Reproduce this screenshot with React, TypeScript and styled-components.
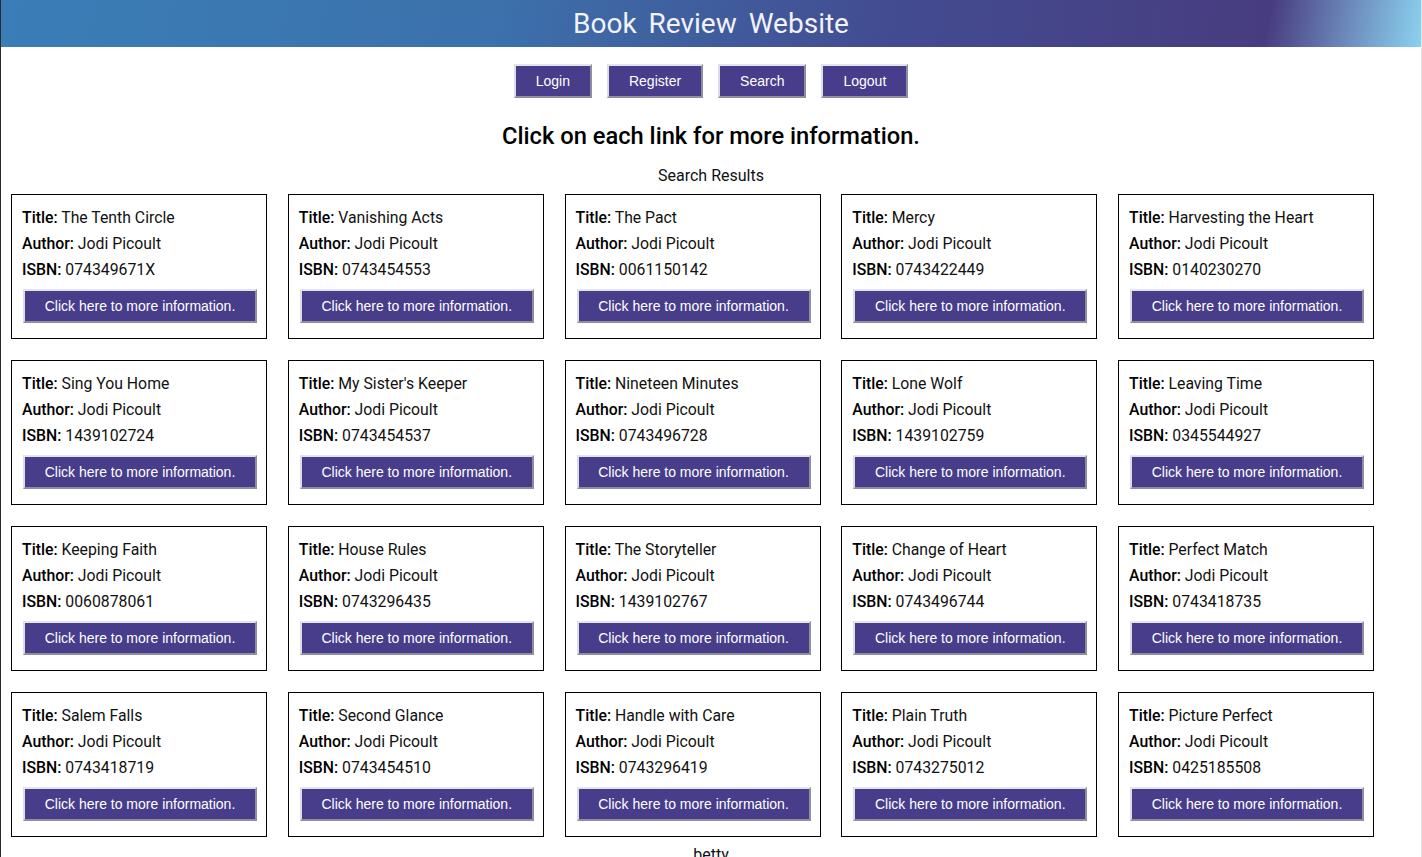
import React from "react";
import styled, { createGlobalStyle } from "styled-components";

const GlobalStyle = createGlobalStyle`
  html, body { margin: 0; padding: 0; background: #ffffff; }
  body { font-family: Roboto, "Liberation Sans", Arial, sans-serif; color: #111; }
`;

const Page = styled.div`
  min-height: 857px;
  border-left: 1px solid #2a2a2a;
  border-right: 1px solid #e4e4e4;
  box-sizing: border-box;
`;

const Header = styled.header`
  height: 47px;
  display: flex;
  align-items: center;
  justify-content: center;
  background: linear-gradient(100deg, #3a7eb7 0%, #3c71ab 35%, #434c91 62%, #483c80 89%, #6f8fc0 95%, #8ad2ee 100%);
`;

const SiteTitle = styled.h1`
  margin: 0;
  font-family: Roboto, "Liberation Sans", sans-serif;
  font-weight: 400;
  font-size: 28px;
  word-spacing: 5px;
  color: #f2f2fa;
  line-height: 47px;
`;

const Nav = styled.nav`
  display: flex;
  justify-content: center;
  gap: 15px;
  margin-top: 17px;
`;

const RaisedButton = styled.button<{ $wide?: boolean }>`
  box-sizing: border-box;
  height: 34px;
  width: ${(p) => (p.$wide ? "100%" : "auto")};
  padding: ${(p) => (p.$wide ? "0" : "0 20px")};
  background: #483d8b;
  color: #ffffff;
  font-family: "Liberation Sans", Arial, sans-serif;
  font-size: 14px;
  border-style: solid;
  border-width: 2px;
  border-color: #e4e4ee #8e8e9e #8e8e9e #dcdce6;
  cursor: pointer;
`;

const Heading = styled.h2`
  margin: 24px 0 0;
  text-align: center;
  font-family: Roboto, sans-serif;
  font-weight: 500;
  font-size: 23.7px;
  line-height: 28px;
  color: #000;
`;

const SubHeading = styled.p`
  margin: 16px 0 0;
  text-align: center;
  font-size: 16px;
  line-height: 20px;
  color: #111;
`;

const Grid = styled.div`
  display: grid;
  grid-template-columns: repeat(5, 256px);
  column-gap: 20.75px;
  row-gap: 21px;
  padding-left: 10px;
  margin-top: 8px;
`;

const Card = styled.div`
  box-sizing: border-box;
  width: 256px;
  border: 1px solid #000;
  padding: 10px 10px 15px 10px;
`;

const Line = styled.div`
  font-size: 15.8px;
  line-height: 26px;
  color: #111;
  white-space: nowrap;
`;

const Label = styled.span`
  font-weight: 500;
  color: #000;
`;

const ButtonWrap = styled.div`
  margin-top: 6px;
  padding-left: 1px;
  margin-right: -1px;
`;

const Footer = styled.p`
  margin: 8px 0 0;
  text-align: center;
  font-size: 16px;
  line-height: 20px;
  color: #111;
`;

const books: [string, string][] = [
  ["The Tenth Circle", "074349671X"],
  ["Vanishing Acts", "0743454553"],
  ["The Pact", "0061150142"],
  ["Mercy", "0743422449"],
  ["Harvesting the Heart", "0140230270"],
  ["Sing You Home", "1439102724"],
  ["My Sister's Keeper", "0743454537"],
  ["Nineteen Minutes", "0743496728"],
  ["Lone Wolf", "1439102759"],
  ["Leaving Time", "0345544927"],
  ["Keeping Faith", "0060878061"],
  ["House Rules", "0743296435"],
  ["The Storyteller", "1439102767"],
  ["Change of Heart", "0743496744"],
  ["Perfect Match", "0743418735"],
  ["Salem Falls", "0743418719"],
  ["Second Glance", "0743454510"],
  ["Handle with Care", "0743296419"],
  ["Plain Truth", "0743275012"],
  ["Picture Perfect", "0425185508"],
];

export default function App() {
  return (
    <>
      <GlobalStyle />
      <Page>
        <Header>
          <SiteTitle>Book Review Website</SiteTitle>
        </Header>
        <Nav>
          <RaisedButton>Login</RaisedButton>
          <RaisedButton>Register</RaisedButton>
          <RaisedButton>Search</RaisedButton>
          <RaisedButton>Logout</RaisedButton>
        </Nav>
        <Heading>Click on each link for more information.</Heading>
        <SubHeading>Search Results</SubHeading>
        <Grid>
          {books.map(([title, isbn]) => (
            <Card key={isbn}>
              <Line>
                <Label>Title:</Label> {title}
              </Line>
              <Line>
                <Label>Author:</Label> Jodi Picoult
              </Line>
              <Line>
                <Label>ISBN:</Label> {isbn}
              </Line>
              <ButtonWrap>
                <RaisedButton $wide>Click here to more information.</RaisedButton>
              </ButtonWrap>
            </Card>
          ))}
        </Grid>
        <Footer>betty</Footer>
      </Page>
    </>
  );
}
